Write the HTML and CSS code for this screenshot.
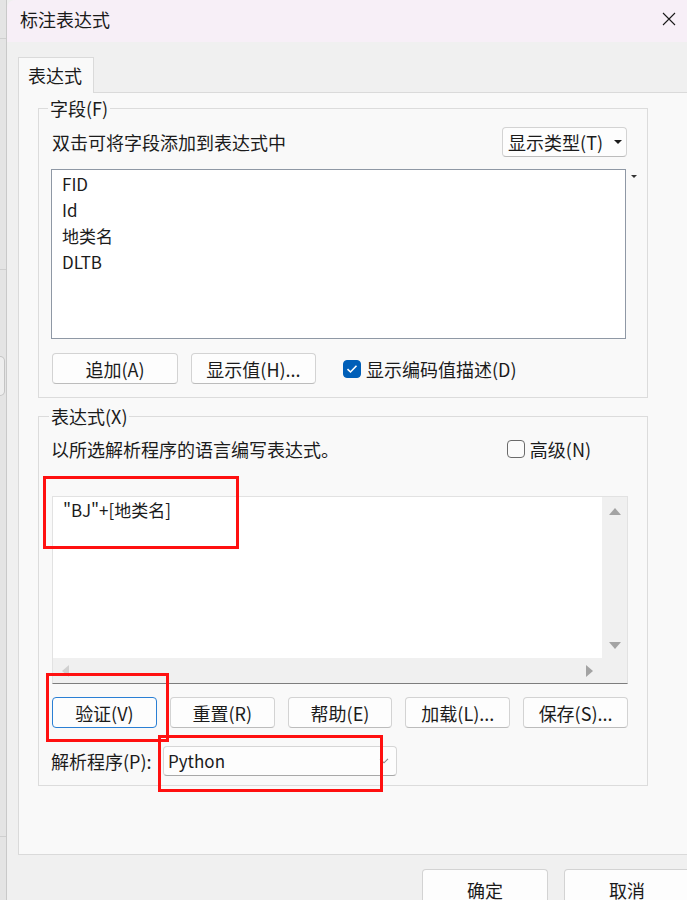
FILE: index.html
```html
<!DOCTYPE html>
<html lang="zh-CN">
<head>
<meta charset="utf-8">
<title>标注表达式</title>
<link rel="stylesheet" href="styles.css">
</head>
<body>
<div class="screen">
  <div class="behind">
    <div class="behind-line l1"></div>
    <div class="behind-line l2"></div>
    <div class="behind-knob"></div>
    <div class="behind-line l3"></div>
  </div>
  <div class="dialog">
    <div class="titlebar">
      <span class="title">标注表达式</span>
      <svg class="close" width="14" height="14" viewBox="0 0 14 14"><path d="M1 1 L13 13 M13 1 L1 13" stroke="#1a1a1a" stroke-width="1.1" fill="none"/></svg>
    </div>
    <div class="client">
      <div class="tabs"><div class="tab">表达式</div></div>
      <div class="panel">
        <fieldset class="group g1">
          <legend>字段(F)</legend>
          <div class="head-row">
            <span class="hint">双击可将字段添加到表达式中</span>
            <button class="btn dd">显示类型(T)<span class="dd-arrow"></span></button>
          </div>
          <div class="list-wrap">
            <div class="list">
              <div class="item">FID</div>
              <div class="item">Id</div>
              <div class="item">地类名</div>
              <div class="item">DLTB</div>
            </div>
            <span class="mini-arrow"></span>
          </div>
          <div class="btn-row r1">
            <button class="btn w126">追加(A)</button>
            <button class="btn w125">显示值(H)...</button>
            <label class="check">
              <span class="box checked"><svg width="12" height="10" viewBox="0 0 12 10"><path d="M1.5 5.2 L4.5 8 L10.5 1.8" stroke="#fff" stroke-width="1.6" fill="none"/></svg></span>
              <span>显示编码值描述(D)</span>
            </label>
          </div>
        </fieldset>

        <fieldset class="group g2">
          <legend>表达式(X)</legend>
          <div class="head-row2">
            <span class="hint">以所选解析程序的语言编写表达式。</span>
            <label class="check adv">
              <span class="box"></span>
              <span>高级(N)</span>
            </label>
          </div>
          <div class="editor">
            <div class="edit-area">"BJ"+[地类名]</div>
            <div class="vscroll">
              <span class="tri up"></span>
              <span class="tri down"></span>
            </div>
            <div class="hscroll">
              <span class="tri left"></span>
              <span class="tri right"></span>
            </div>
            <div class="corner"></div>
          </div>
          <div class="btn-row r2">
            <button class="btn focus">验证(V)</button>
            <button class="btn">重置(R)</button>
            <button class="btn">帮助(E)</button>
            <button class="btn">加载(L)...</button>
            <button class="btn">保存(S)...</button>
          </div>
          <div class="parser-row">
            <span class="plabel">解析程序(P):</span>
            <div class="combo">
              <span class="combo-val">Python</span>
              <svg class="chev" width="10" height="6" viewBox="0 0 10 6"><path d="M1 0.8 L5 4.8 L9 0.8" stroke="#8a8a8a" stroke-width="1.1" fill="none"/></svg>
            </div>
          </div>
        </fieldset>
      </div>
      <div class="footer">
        <button class="btn big">确定</button>
        <button class="btn big">取消</button>
      </div>
    </div>
  </div>

  <div class="mark m1"></div>
  <div class="mark m2"></div>
  <div class="mark m3"></div>
</div>
</body>
</html>
```

FILE: styles.css
```css
* { box-sizing: border-box; }

html, body {
  margin: 0;
  padding: 0;
  background: #f0f0f0;
}

body {
  font-family: "Noto Sans CJK SC", "Noto Sans", sans-serif;
  font-size: 18px;
  color: #1b1b1b;
}

.screen {
  position: relative;
  width: 687px;
  height: 900px;
  overflow: hidden;
  display: flex;
}

/* app window behind the dialog */
.behind {
  flex: none;
  width: 7px;
  background: #e4e4e4;
  border-right: 1px solid #c9c9c9;
  display: flex;
  flex-direction: column;
}
.behind-line {
  height: 1px;
  background: #cfcfcf;
}
.behind-line.l1 { margin-top: 38px; }
.behind-line.l2 { margin-top: 230px; }
.behind-knob {
  margin-top: 86px;
  width: 5px;
  height: 40px;
  border: 1px solid #c4c4c4;
  border-left: none;
  border-radius: 0 5px 5px 0;
  background: #eeeeee;
}
.behind-line.l3 { margin-top: 440px; }

.dialog {
  flex: none;
  width: 700px;
  display: flex;
  flex-direction: column;
  background: #f0f0f0;
  border-top-left-radius: 8px;
  overflow: hidden;
}

.titlebar {
  height: 42px;
  flex: none;
  background: #f7eff7;
  display: flex;
  align-items: center;
  justify-content: space-between;
  padding: 0 31px 4px 13px;
}
.title {
  font-size: 18px;
  line-height: 24px;
  color: #1a1a1a;
}

.client {
  padding: 15px 0 0 11px;
  display: flex;
  flex-direction: column;
}

.tabs {
  display: flex;
  height: 35px;
}
.tab {
  width: 76px;
  height: 36px;
  background: #f9f9f9;
  border: 1px solid #dadada;
  border-bottom: none;
  padding: 5px 0 0 9px;
  font-size: 18px;
  line-height: 24px;
  position: relative;
  z-index: 1;
}

.panel {
  background: #f9f9f9;
  border: 1px solid #dadada;
  padding: 5px 0 68px 19px;
  width: 700px;
}

.group {
  margin: 0;
  width: 610px;
  border: 1px solid #dcdcdc;
  padding: 9px 20px 13px 12px;
  min-inline-size: 0;
}
.group legend {
  padding: 0 2px;
  margin-left: -3px;
  font-size: 18px;
  line-height: 20px;
}
.g2 {
  margin-top: 8px;
  padding: 11px 19px 9px 13px;
}

.head-row {
  height: 30px;
  display: flex;
  align-items: center;
  justify-content: space-between;
}
.hint {
  margin-left: 1px;
  line-height: 24px;
}

.btn {
  font-family: inherit;
  font-size: 18px;
  color: #1b1b1b;
  background: #fdfdfd;
  border: 1px solid #d3d3d3;
  border-bottom-color: #bcbcbc;
  border-radius: 4px;
  height: 31px;
  padding: 0;
  line-height: 24px;
  display: inline-flex;
  align-items: center;
  justify-content: center;
}
.btn.dd {
  width: 125px;
  height: 30px;
  justify-content: flex-end;
  padding-right: 4px;
  gap: 11px;
}
.dd-arrow {
  width: 0;
  height: 0;
  border-left: 4px solid transparent;
  border-right: 4px solid transparent;
  border-top: 4px solid #1b1b1b;
}

.list-wrap {
  position: relative;
  margin-top: 12px;
  width: 575px;
}
.list {
  height: 170px;
  background: #ffffff;
  border: 1px solid #8f98a5;
  padding: 1px 10px;
}
.item {
  line-height: 26px;
  font-size: 17px;
}
.mini-arrow {
  position: absolute;
  right: -11px;
  top: 6px;
  width: 0;
  height: 0;
  border-left: 3px solid transparent;
  border-right: 3px solid transparent;
  border-top: 3px solid #333;
}

.btn-row {
  display: flex;
  align-items: center;
}
.btn-row.r1 {
  margin-top: 14px;
  margin-left: 1px;
  gap: 13px;
}
.w126 { width: 126px; }
.w125 { width: 125px; }

.check {
  display: inline-flex;
  align-items: center;
  gap: 5px;
  line-height: 24px;
}
.r1 .check { margin-left: 14px; }
.box {
  width: 18px;
  height: 18px;
  border: 1px solid #6b6b6b;
  border-radius: 4px;
  background: #fbfbfb;
  display: inline-flex;
  align-items: center;
  justify-content: center;
}
.box.checked {
  background: #005fb8;
  border-color: #005fb8;
}

.head-row2 {
  height: 24px;
  display: flex;
  align-items: center;
  justify-content: space-between;
  padding-right: 37px;
}
.head-row2 .hint { margin-left: -1px; }

.editor {
  margin-top: 35px;
  width: 576px;
  height: 188px;
  display: grid;
  grid-template-columns: 1fr 25px;
  grid-template-rows: 1fr 25px;
  border: 1px solid #e2e2e2;
  border-bottom: 1px solid #7d7d7d;
  background: #ffffff;
}
.edit-area {
  padding: 2px 10px;
  line-height: 22px;
  font-size: 17px;
  background: #ffffff;
}
.vscroll {
  background: #f0f0f0;
  display: flex;
  flex-direction: column;
  align-items: center;
  justify-content: space-between;
  padding: 11px 0 9px;
}
.hscroll {
  background: #f0f0f0;
  display: flex;
  align-items: center;
  justify-content: space-between;
  padding: 0 9px 0 9px;
}
.corner { background: #f0f0f0; }

.tri { width: 0; height: 0; display: block; }
.tri.up {
  border-left: 6px solid transparent;
  border-right: 6px solid transparent;
  border-bottom: 7px solid #a3a3a3;
}
.tri.down {
  border-left: 6px solid transparent;
  border-right: 6px solid transparent;
  border-top: 7px solid #a3a3a3;
}
.tri.left {
  border-top: 6px solid transparent;
  border-bottom: 6px solid transparent;
  border-right: 7px solid #d0d0d0;
}
.tri.right {
  border-top: 6px solid transparent;
  border-bottom: 6px solid transparent;
  border-left: 7px solid #a3a3a3;
}

.btn-row.r2 {
  margin-top: 13px;
  gap: 13px;
}
.r2 .btn { width: 105px; }
.btn.focus {
  border: 1.5px solid #2a7fd4;
}

.parser-row {
  margin-top: 18px;
  height: 30px;
  display: flex;
  align-items: center;
}
.plabel {
  margin-left: -1px;
  line-height: 24px;
  width: 112px;
}
.combo {
  width: 234px;
  height: 30px;
  background: #fdfdfd;
  border: 1px solid #d6d6d6;
  border-bottom-color: #a8a8a8;
  border-radius: 4px;
  display: flex;
  align-items: center;
  justify-content: space-between;
  padding: 0 7px 0 4px;
}
.combo-val {
  font-size: 17px;
  line-height: 24px;
}

.footer {
  display: flex;
  gap: 16px;
  padding-left: 404px;
  margin-top: 14px;
}
.btn.big {
  width: 126px;
  height: 40px;
  align-items: flex-start;
  padding-top: 8px;
}

/* red annotation boxes drawn over the screenshot */
.mark {
  position: absolute;
  border: 3px solid #ff1010;
  pointer-events: none;
}
.m1 { left: 43px; top: 476px; width: 196px; height: 73px; }
.m2 { left: 46px; top: 673px; width: 123px; height: 69px; }
.m3 { left: 158px; top: 735px; width: 225px; height: 57px; }
```
